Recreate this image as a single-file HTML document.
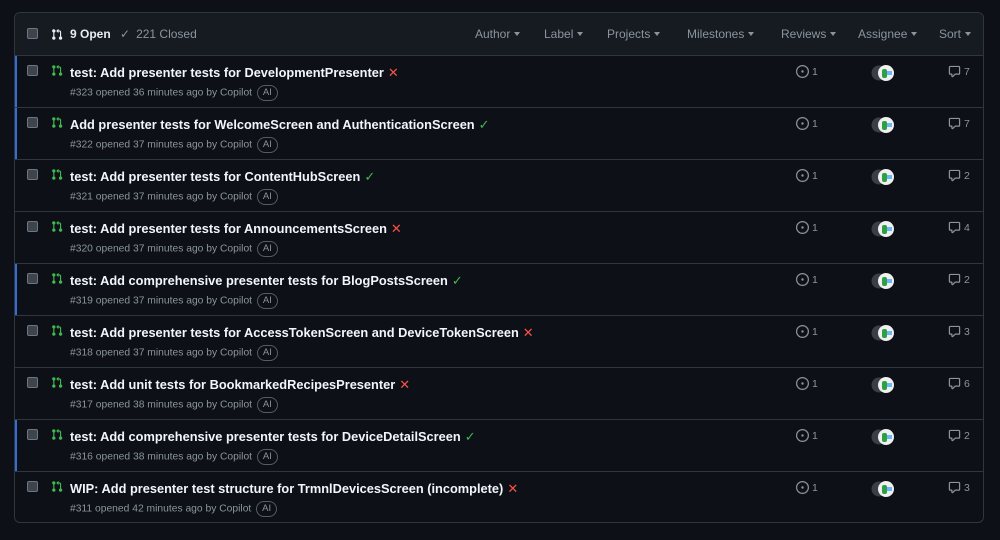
<!DOCTYPE html>
<html><head><style>
*{box-sizing:border-box;margin:0;padding:0}
body{width:1000px;height:540px;background:#0d1117;font-family:"Liberation Sans",sans-serif;color:#e6edf3;overflow:hidden;position:relative}
.box{position:absolute;left:14px;top:12px;width:970px;height:511px;border:1px solid #30363d;border-radius:6px;overflow:hidden}
.hdr{height:43px;background:#161b22;border-bottom:1px solid #30363d;position:relative}
.cb{position:absolute;width:11px;height:11px;border:1px solid #6e7681;background:#3d444d;border-radius:2px}
.hdr .cb{left:12px;top:15px}
.open{position:absolute;left:36px;top:14px;font-size:12px;font-weight:bold;color:#e6edf3}
.closed{position:absolute;left:105px;top:14px;font-size:12px;color:#8b949e}
.f{position:absolute;top:14px;font-size:12px;color:#8b949e}
.f:after{content:"";display:inline-block;margin-left:4px;border:3.5px solid transparent;border-top:4px solid #8b949e;vertical-align:-1px}
.row{height:52px;border-bottom:1px solid #30363d;position:relative}
.row:last-child{border-bottom:none}
.row.b{box-shadow:inset 2px 0 0 #2f6fd6}
.row .cb{left:12px;top:9px}
.pr{position:absolute;left:36px;top:8px}
.t{position:absolute;left:55px;top:9px;font-size:12.8px;font-weight:bold;color:#f0f6fc;white-space:nowrap}
.x{color:#f85149;font-weight:normal;margin-left:4px}
.ok{color:#3fb950;font-weight:normal;margin-left:4px}
.m{position:absolute;left:55px;top:29px;font-size:10.3px;color:#8b949e;white-space:nowrap;line-height:16px}
.ai{display:inline-block;border:1px solid #555c66;border-radius:9px;padding:0 5px;font-size:9.5px;margin-left:2px;line-height:14px;vertical-align:middle}
.iss{position:absolute;left:781px;top:9px;font-size:10.5px;color:#8b949e;display:flex;align-items:center;gap:3px}
.av{position:absolute;left:856px;top:9px;width:24px;height:16px}
.cm{position:absolute;left:933px;top:9px;font-size:10.5px;color:#8b949e;display:flex;align-items:center;gap:3px}
</style></head><body>
<div class="box">
<div class="hdr"><div class="cb"></div>
<svg class="pr" style="top:15px" width="12" height="13" viewBox="0 0 16 16" fill="#e6edf3"><path d="M1.5 3.25a2.25 2.25 0 1 1 3 2.122v5.256a2.251 2.251 0 1 1-1.5 0V5.372A2.25 2.25 0 0 1 1.5 3.25Zm5.677-.177L9.573.677A.25.25 0 0 1 10 .854V2.5h1A2.5 2.5 0 0 1 13.5 5v5.628a2.251 2.251 0 1 1-1.5 0V5a1 1 0 0 0-1-1h-1v1.646a.25.25 0 0 1-.427.177L7.177 3.427a.25.25 0 0 1 0-.354Z"/></svg>
<span class="open" style="left:55px">9 Open</span>
<span class="closed"><span style="margin-right:6px">✓</span>221 Closed</span>
<span class="f" style="left:460px">Author</span>
<span class="f" style="left:529px">Label</span>
<span class="f" style="left:592px">Projects</span>
<span class="f" style="left:672px">Milestones</span>
<span class="f" style="left:766px">Reviews</span>
<span class="f" style="left:843px">Assignee</span>
<span class="f" style="left:924px">Sort</span>
</div>
<div id="rows"></div>
</div>
<script>
var d=[["test: Add presenter tests for DevelopmentPresenter",0,"#323 opened 36 minutes ago",7,1],
["Add presenter tests for WelcomeScreen and AuthenticationScreen",1,"#322 opened 37 minutes ago",7,1],
["test: Add presenter tests for ContentHubScreen",1,"#321 opened 37 minutes ago",2,0],
["test: Add presenter tests for AnnouncementsScreen",0,"#320 opened 37 minutes ago",4,0],
["test: Add comprehensive presenter tests for BlogPostsScreen",1,"#319 opened 37 minutes ago",2,1],
["test: Add presenter tests for AccessTokenScreen and DeviceTokenScreen",0,"#318 opened 37 minutes ago",3,0],
["test: Add unit tests for BookmarkedRecipesPresenter",0,"#317 opened 38 minutes ago",6,0],
["test: Add comprehensive presenter tests for DeviceDetailScreen",1,"#316 opened 38 minutes ago",2,1],
["WIP: Add presenter test structure for TrmnlDevicesScreen (incomplete)",0,"#311 opened 42 minutes ago",3,0]];
var h="";
d.forEach(function(r){
h+='<div class="row'+(r[4]?' b':'')+'"><div class="cb"></div>'+
'<svg class="pr" width="12" height="13" viewBox="0 0 16 16" fill="#3fb950"><path d="M1.5 3.25a2.25 2.25 0 1 1 3 2.122v5.256a2.251 2.251 0 1 1-1.5 0V5.372A2.25 2.25 0 0 1 1.5 3.25Zm5.677-.177L9.573.677A.25.25 0 0 1 10 .854V2.5h1A2.5 2.5 0 0 1 13.5 5v5.628a2.251 2.251 0 1 1-1.5 0V5a1 1 0 0 0-1-1h-1v1.646a.25.25 0 0 1-.427.177L7.177 3.427a.25.25 0 0 1 0-.354Z"/></svg>'+
'<div class="t">'+r[0]+(r[1]?'<span class="ok">✓</span>':'<span class="x">✕</span>')+'</div>'+
'<div class="m">'+r[2]+' by Copilot <span class="ai">AI</span></div>'+
'<div class="iss"><svg width="13" height="13" viewBox="0 0 16 16" fill="#8b949e"><path d="M8 9.5a1.5 1.5 0 1 0 0-3 1.5 1.5 0 0 0 0 3Z"/><path d="M8 0a8 8 0 1 1 0 16A8 8 0 0 1 8 0ZM1.5 8a6.5 6.5 0 1 0 13 0 6.5 6.5 0 0 0-13 0Z"/></svg>1</div>'+
'<svg class="av" viewBox="0 0 24 16"><circle cx="8" cy="8" r="7.5" fill="#3a3f46"/><circle cx="15" cy="8" r="8" fill="#f0f0f0"/><rect x="11" y="4" width="5" height="9" rx="2" fill="#2ea043"/><rect x="16" y="6" width="5" height="4" fill="#6cb6ff"/></svg>'+
'<div class="cm"><svg width="13" height="13" viewBox="0 0 16 16" fill="#8b949e"><path d="M1 2.75C1 1.784 1.784 1 2.75 1h10.5c.966 0 1.75.784 1.75 1.75v7.5A1.75 1.75 0 0 1 13.25 12H9.060l-2.573 2.573A1.458 1.458 0 0 1 4 13.543V12H2.75A1.75 1.75 0 0 1 1 10.25Zm1.750-.25a.25.25 0 0 0-.25.25v7.5c0 .138.112.25.25.25h2a.75.75 0 0 1 .75.75v2.19l2.720-2.720a.749.749 0 0 1 .53-.22h4.5a.25.25 0 0 0 .25-.25v-7.5a.25.25 0 0 0-.25-.25Z"/></svg>'+r[3]+'</div></div>';
});
document.getElementById("rows").innerHTML=h;
</script>
</body></html>
